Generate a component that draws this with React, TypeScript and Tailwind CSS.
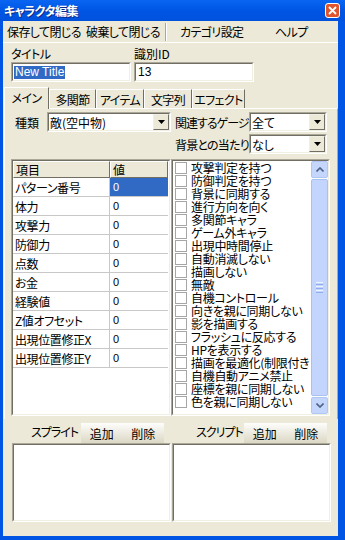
import React from 'react';

function Sunken({ className = '', innerClass = '', children }: { className?: string; innerClass?: string; children?: React.ReactNode }) {
  return (
    <div className={`border border-t-[#ACA899] border-l-[#ACA899] border-b-white border-r-white ${className}`}>
      <div className={`border border-t-[#716F64] border-l-[#716F64] border-b-[#F1EFE2] border-r-[#F1EFE2] h-full w-full bg-white ${innerClass}`}>
        {children}
      </div>
    </div>
  );
}

function Combo({ className, text }: { className: string; text: string }) {
  return (
    <Sunken className={`h-[20px] ${className}`} innerClass="flex items-stretch">
      <div className="flex-1 flex items-center pl-[1px] overflow-hidden whitespace-nowrap">{text}</div>
      <div className="w-[16px] bg-[#ECE9D8] border border-t-[#F1EFE2] border-l-[#F1EFE2] border-b-[#716F64] border-r-[#716F64] flex items-center justify-center">
        <svg width="7" height="4" viewBox="0 0 7 4">
          <path d="M0 0 H7 L3.5 4 Z" fill="#000" />
        </svg>
      </div>
    </Sunken>
  );
}

const rows = [
  'パターン番号',
  '体力',
  '攻撃力',
  '防御力',
  '点数',
  'お金',
  '経験値',
  'Z値オフセット',
  '出現位置修正X',
  '出現位置修正Y',
];

const checks = [
  '攻撃判定を持つ',
  '防御判定を持つ',
  '背景に同期する',
  '進行方向を向く',
  '多関節キャラ',
  'ゲーム外キャラ',
  '出現中時間停止',
  '自動消滅しない',
  '描画しない',
  '無敵',
  '自機コントロール',
  '向きを親に同期しない',
  '影を描画する',
  'フラッシュに反応する',
  'HPを表示する',
  '描画を最適化(制限付き',
  '自機自動アニメ禁止',
  '座標を親に同期しない',
  '色を親に同期しない',
];

function ScrollBtn({ up }: { up: boolean }) {
  return (
    <div className="h-[17px] w-[17px] rounded-[2px] bg-[#C5D6FC] border border-[#B0C6F4] flex items-center justify-center">
      <svg width="8" height="5" viewBox="0 0 8 5">
        <path d={up ? 'M0.5 4.5 L4 1 L7.5 4.5' : 'M0.5 0.5 L4 4 L7.5 0.5'} stroke="#4D6185" strokeWidth="1.6" fill="none" />
      </svg>
    </div>
  );
}

export default function App() {
  return (
    <div className="w-[345px] h-[540px] flex flex-col bg-[#0055E5] font-['MS_UI_Gothic','Noto_Sans_CJK_JP',sans-serif] text-[12px] leading-[13px] text-black [font-feature-settings:'palt'] overflow-hidden">
      {/* Title bar */}
      <div className="h-[21px] flex items-center pl-[4px] bg-linear-to-b from-[#0A66F2] via-[#0055E5] to-[#0052DC]">
        <span className="text-white font-bold text-[12px] tracking-[-0.5px] [text-shadow:1px_1px_0_#0A2A8A]">キャラクタ編集</span>
        <div className="ml-auto mr-[5px] w-[15px] h-[15px] rounded-[3px] bg-[#E0552B] border border-white flex items-center justify-center">
          <svg width="9" height="9" viewBox="0 0 9 9">
            <path d="M1 1 L8 8 M8 1 L1 8" stroke="#fff" strokeWidth="1.8" />
          </svg>
        </div>
      </div>

      {/* Client area */}
      <div className="flex-1 ml-[3px] mr-[7px] mb-[4px] bg-[#ECE9D8] flex flex-col">
        {/* Menu */}
        <div className="h-[22px] flex items-center border-b border-white pl-[4px] tracking-[-0.6px] whitespace-nowrap">
          <div className="w-[79px]">保存して閉じる</div>
          <div className="w-[79px]">破棄して閉じる</div>
          <div className="w-[2px] h-[18px] border-l border-l-[#ACA899] border-r border-r-white" />
          <div className="ml-[13px] w-[95px]">カテゴリ設定</div>
          <div>ヘルプ</div>
        </div>

        {/* Title / ID labels */}
        <div className="mt-[2px] h-[16px] flex items-center pl-[8px]">
          <div className="w-[123px] tracking-[-0.5px]">タイトル</div>
          <div>識別ID</div>
        </div>
        <div className="mt-[1px] h-[20px] flex pl-[8px]">
          <Sunken className="w-[120px] h-[20px]" innerClass="flex items-center pl-[1px]">
            <span className="bg-[#316AC5] text-white px-[1px] font-['Liberation_Sans',sans-serif]">New Title</span>
          </Sunken>
          <Sunken className="ml-[3px] w-[120px] h-[20px]" innerClass="flex items-center pl-[2px]">
            <span className="font-['Liberation_Sans',sans-serif]">13</span>
          </Sunken>
        </div>

        {/* Tabs */}
        <div className="mt-[5px] h-[21px] flex items-end ml-[1px] whitespace-nowrap tracking-[-0.6px]">
          <div className="relative z-10 -mb-[1px] h-[22px] w-[45px] bg-[#ECE9D8] border-t border-l border-white border-r border-r-[#716F64] flex items-center justify-center pb-[2px]">
            メイン
          </div>
          <div className="h-[19px] w-[47px] border-t border-l border-white border-r border-r-[#716F64] flex items-center justify-center">多関節</div>
          <div className="h-[19px] w-[48px] border-t border-l border-white border-r border-r-[#716F64] flex items-center justify-center">アイテム</div>
          <div className="h-[19px] w-[48px] border-t border-l border-white border-r border-r-[#716F64] flex items-center justify-center">文字列</div>
          <div className="h-[19px] w-[53px] border-t border-l border-white border-r border-r-[#716F64] flex items-center justify-center">エフェクト</div>
        </div>

        {/* Panel */}
        <div className="ml-[1px] border-t border-l border-white border-r border-r-[#ACA899] pt-[3px] pb-[3px] flex flex-col">
          <div className="h-[20px] flex items-center pl-[10px]">
            <div className="w-[32px]">種類</div>
            <Combo className="w-[124px]" text="敵(空中物)" />
            <div className="ml-[4px] w-[74px] tracking-[-1px] whitespace-nowrap">関連するゲージ</div>
            <Combo className="w-[78px]" text="全て" />
          </div>
          <div className="mt-[2px] h-[20px] flex items-center pl-[170px]">
            <div className="w-[74px] tracking-[-0.8px] whitespace-nowrap">背景との当たり</div>
            <Combo className="w-[78px]" text="なし" />
          </div>

          <div className="mt-[5px] h-[257px] flex pl-[6px]">
            {/* Table */}
            <Sunken className="w-[160px] h-[257px]" innerClass="flex flex-col">
              <div className="h-[17px] flex shrink-0">
                <div className="w-[97px] bg-[#ECE9D8] border-t border-l border-white border-b border-r border-b-[#716F64] border-r-[#716F64] flex items-center pl-[2px]">項目</div>
                <div className="w-[58px] bg-[#ECE9D8] border-t border-l border-white border-b border-r border-b-[#716F64] border-r-[#716F64] flex items-center pl-[2px]">値</div>
              </div>
              {rows.map((r, i) => (
                <div key={r} className="h-[19px] flex shrink-0">
                  <div className="w-[97px] border-b border-r border-[#C8C8C8] flex items-center pl-[2px] whitespace-nowrap tracking-[-0.4px]">{r}</div>
                  <div
                    className={
                      i === 0
                        ? "w-[58px] border-b border-[#C8C8C8] bg-[#316AC5] text-white flex items-center pl-[3px] font-['Liberation_Sans',sans-serif] text-[11px]"
                        : "w-[58px] border-b border-[#C8C8C8] flex items-center pl-[3px] font-['Liberation_Sans',sans-serif] text-[11px]"
                    }
                  >
                    0
                  </div>
                </div>
              ))}
            </Sunken>

            {/* Checklist */}
            <Sunken className="w-[159px] h-[257px]" innerClass="flex">
              <div className="flex-1 flex flex-col overflow-hidden tracking-[-0.3px]">
                {checks.map((c) => (
                  <div key={c} className="h-[13px] shrink-0 flex items-center pl-[2px] whitespace-nowrap">
                    <div className="w-[12px] h-[12px] border border-[#A6A6A6] bg-white shrink-0" />
                    <span className="ml-[4px] leading-[12px]">{c}</span>
                  </div>
                ))}
              </div>
              <div className="w-[17px] flex flex-col bg-[#FCFCFA]">
                <ScrollBtn up />
                <div className="flex-1 my-[1px] rounded-[2px] bg-[#C3D5FD] border border-[#A9C0F2] flex flex-col items-center justify-center gap-[1px]">
                  <div className="w-[7px] h-[1px] bg-[#EEF3FF]" />
                  <div className="w-[7px] h-[1px] bg-[#8EAEF0]" />
                  <div className="w-[7px] h-[1px] bg-[#EEF3FF]" />
                  <div className="w-[7px] h-[1px] bg-[#8EAEF0]" />
                  <div className="w-[7px] h-[1px] bg-[#EEF3FF]" />
                  <div className="w-[7px] h-[1px] bg-[#8EAEF0]" />
                </div>
                <ScrollBtn up={false} />
              </div>
            </Sunken>
          </div>
        </div>

        {/* Bottom section */}
        <div className="mt-[4px] flex pl-[9px]">
          <div className="w-[160px] flex flex-col">
            <div className="h-[20px] flex items-center pl-[19px]">
              <div className="w-[50px] pb-[3px] tracking-[-1px] whitespace-nowrap">スプライト</div>
              <div className="w-[83px] h-[20px] flex bg-linear-to-b from-[#FDFDFB] to-[#DCD8C5]">
                <div className="flex-1 flex items-center justify-center">追加</div>
                <div className="flex-1 flex items-center justify-center">削除</div>
              </div>
            </div>
            <Sunken className="w-[159px] h-[79px]" />
          </div>
          <div className="w-[160px] flex flex-col">
            <div className="h-[20px] flex items-center pl-[24px]">
              <div className="w-[48px] pb-[3px] tracking-[-1px] whitespace-nowrap">スクリプト</div>
              <div className="w-[83px] h-[20px] flex bg-linear-to-b from-[#FDFDFB] to-[#DCD8C5]">
                <div className="flex-1 flex items-center justify-center">追加</div>
                <div className="flex-1 flex items-center justify-center">削除</div>
              </div>
            </div>
            <Sunken className="w-[159px] h-[79px]" />
          </div>
        </div>
      </div>
    </div>
  );
}
